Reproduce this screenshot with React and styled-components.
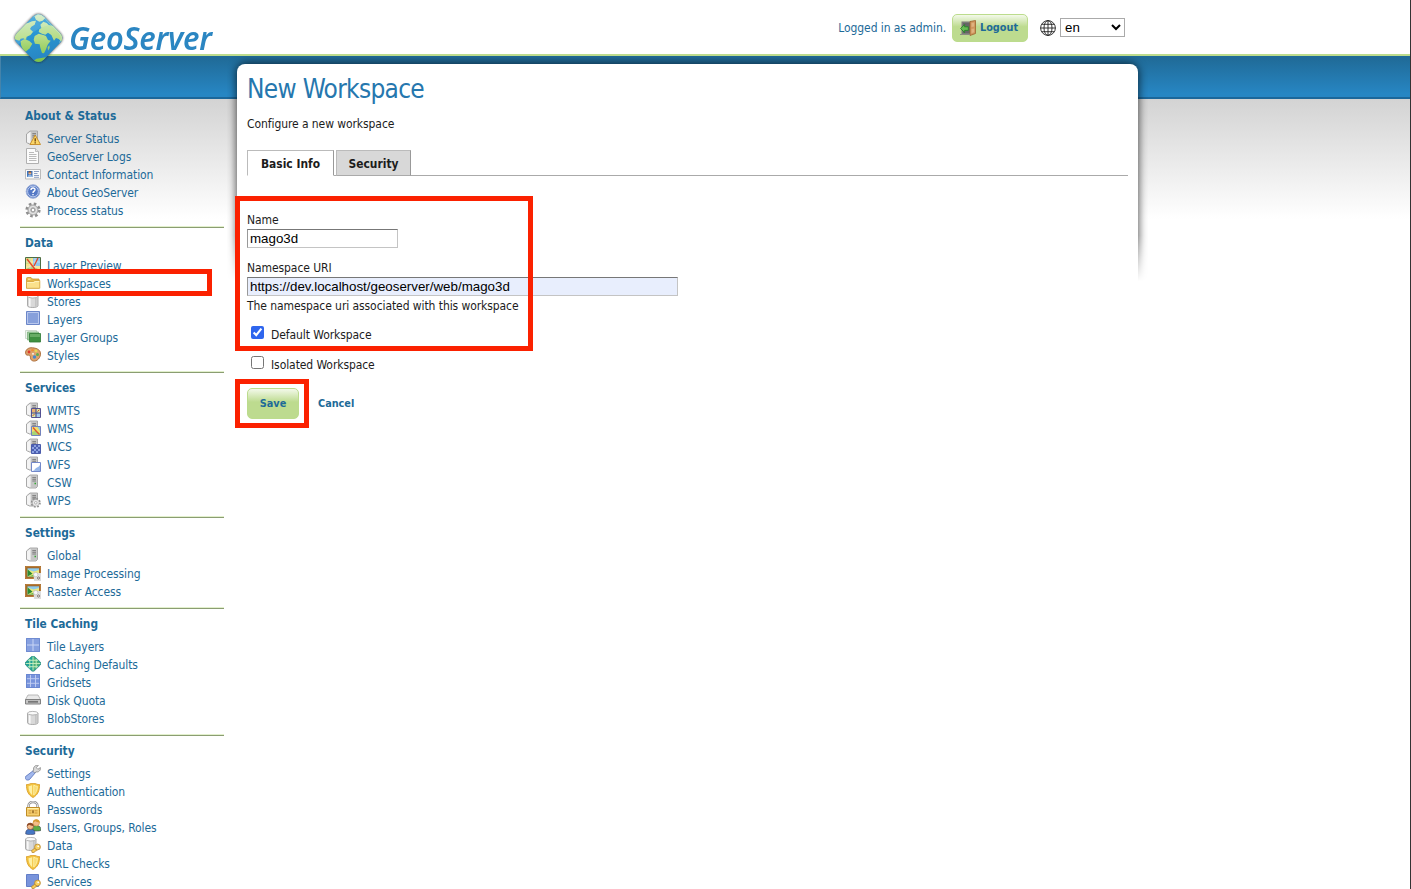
import React from "react";
import styled, { createGlobalStyle, css } from "styled-components";

const GlobalStyle = createGlobalStyle`
  *, *::before, *::after { box-sizing: border-box; }
  html, body { margin: 0; height: 889px; overflow: hidden; background: #fff; }
  body {
    font-family: "DejaVu Sans Condensed", "DejaVu Sans", Tahoma, sans-serif;
    font-stretch: condensed;
    font-size: 12px;
    line-height: 18px;
    letter-spacing: -0.08px;
    color: #1c1c1c;
  }
`;

const Page = styled.div`
  position: relative;
  width: 1411px;
  height: 889px;
  overflow: hidden;
  border-right: 1px solid #333;
  background: linear-gradient(#d3d3d3, #fff) 0 99px / 100% 120px no-repeat #fff;
`;

const Header = styled.header`
  display: flex;
  justify-content: space-between;
  height: 56px;
  padding-left: 10px;
  padding-right: 285px;
  background: #fff;
  border-bottom: 2px solid #bcdc8d;
`;

const Band = styled.div`
  height: 43px;
  background: linear-gradient(#206b98 5%, #2786c3 92%);
  border-bottom: 2px solid #1c679a;
  border-left: 1px solid #4583aa;
`;

const Brand = styled.a`
  position: relative;
  z-index: 3;
  display: flex;
  height: 66px;
  color: #2b86c2;
`;

const BrandName = styled.span`
  padding: 16px 0 0 3px;
  font: italic 600 32px/43px "Noto Sans", sans-serif;
  letter-spacing: -0.2px;
  transform: scaleX(0.96);
  transform-origin: left;
`;

const Session = styled.div`
  display: flex;
  align-items: center;
  height: 28px;
  margin-top: 14px;
  color: #1d6a98;
`;

const buttonStyle = css`
  display: flex;
  align-items: center;
  justify-content: center;
  padding: 0;
  border: 1px solid #bcdc8d;
  border-radius: 5px;
  background: linear-gradient(#f3f9ea, #bddb8f 45%);
  color: #1d6a98;
  font: bold 10.8px/16px "DejaVu Sans Condensed", "DejaVu Sans", sans-serif;
  font-stretch: condensed;
`;

const LogoutButton = styled.button`
  ${buttonStyle}
  gap: 4px;
  width: 76px;
  height: 28px;
  margin: 0 12px 0 6px;
  padding-right: 2px;
`;

const SaveButton = styled.button`
  ${buttonStyle}
  width: 52px;
  height: 31px;
`;

const LanguageSelect = styled.select`
  width: 65px;
  height: 19px;
  margin: 0 0 1px 4px;
  padding: 0;
  border: 1px solid #aaa;
  border-radius: 0;
  background: #fff;
  color: #000;
  font: 13.3px "Liberation Sans", Arial, sans-serif;
`;

const Columns = styled.div`
  position: relative;
  display: flex;
  align-items: flex-start;
  margin-top: -35px;
`;

const Sidebar = styled.nav`
  width: 204px;
  margin: 35px 13px 0 20px;
`;

const Section = styled.section`
  padding: 7px 0 6px 5px;
  border-top: 1px solid #e2f0cc;
  box-shadow: inset 0 1px #8b9d72;
  &:first-child {
    border-top-color: transparent;
    box-shadow: none;
  }
`;

const SectionTitle = styled.h3`
  margin: 0 0 5px;
  font-size: 11.8px;
  line-height: 18px;
  letter-spacing: 0;
  color: #1d6a98;
`;

const Menu = styled.ul`
  margin: 0;
  padding: 0;
  list-style: none;
`;

const MenuItem = styled.li`
  display: flex;
  gap: 6px;
  height: 18px;
  color: #1d6a98;
  white-space: nowrap;
  svg { flex: none; }
`;

const Panel = styled.main`
  position: relative;
  width: 901px;
  height: 825px;
`;

const ShadowFade = styled.div`
  position: absolute;
  z-index: 0;
  top: -8px;
  left: -10px;
  right: -10px;
  height: 230px;
  padding: 8px 10px 0;
  overflow: hidden;
  mask-image: linear-gradient(#000 78%, transparent 98%);
  &::before {
    content: "";
    display: block;
    height: 400px;
    border-radius: 10px;
    box-shadow: 0 0 9px 1px rgba(0, 0, 0, 0.65);
  }
`;

const Content = styled.div`
  position: relative;
  z-index: 1;
  height: 100%;
  padding: 9px 10px 0;
  border-radius: 8px 8px 0 0;
  background: #fff;
`;

const Title = styled.h1`
  margin: 0;
  color: #2677ae;
  font-size: 26px;
  font-weight: 400;
  line-height: 32px;
  letter-spacing: -0.7px;
`;

const Description = styled.p`
  margin: 10px 0 0;
`;

const Tabs = styled.div`
  display: flex;
  align-items: flex-end;
  gap: 2px;
  height: 26px;
  margin-top: 17px;
  width: 881px;
  box-shadow: inset 0 -1px #aaa;
`;

const Tab = styled.button`
  width: ${(p) => p.$width}px;
  height: 26px;
  padding: 1px 0 0;
  border: 1px solid #bbb;
  border-right-color: #999;
  border-bottom-color: ${(p) => (p.$active ? "#fff" : "#aaa")};
  background: ${(p) => (p.$active ? "#fff" : "#d8d8d8")};
  color: #1c1c1c;
  font: bold 11.9px/20px "DejaVu Sans Condensed", "DejaVu Sans", sans-serif;
  font-stretch: condensed;
`;

const Form = styled.form`
  padding-top: 35px;
`;

const Field = styled.div`
  display: flex;
  flex-direction: column;
  margin-bottom: 11px;
`;

const Hint = styled.span`
  padding-top: 1px;
`;

const TextInput = styled.input`
  width: ${(p) => p.$width}px;
  height: 19px;
  padding: 0 2px;
  border: 1px solid #c4c4c4;
  border-top-color: #777;
  border-left-color: #999;
  border-radius: 0;
  background: ${(p) => (p.$filled ? "#e8eefd" : "#fff")};
  color: #000;
  font: 13.33px "Liberation Sans", Arial, sans-serif;
`;

const CheckRow = styled.label`
  display: flex;
  align-items: flex-start;
  gap: 7px;
  height: 30px;
  padding-left: 4px;
  input { width: 13px; height: 13px; margin: 0; accent-color: #2f66ee; }
`;

const Actions = styled.div`
  display: flex;
  align-items: center;
  gap: 19px;
  margin-top: 2px;
`;

const CancelLink = styled.a`
  color: #1d6a98;
  font-size: 10.8px;
  font-weight: bold;
  letter-spacing: 0;
`;

const Highlight = styled.div`
  position: absolute;
  z-index: 5;
  left: ${(p) => p.$x}px;
  top: ${(p) => p.$y}px;
  width: ${(p) => p.$w}px;
  height: ${(p) => p.$h}px;
  border: 5px solid #fb2100;
  pointer-events: none;
`;

const Server = () => (
  <>
    <path d="M1.500 4 5 1h7.500v11.500L11 14H4.500l-3-1.500z" fill="#d0d0d0" stroke="#a0a0a0" strokeWidth=".9" strokeLinejoin="round" />
    <path d="M2 4.300 5.500 1.800v11.600L2 12.200z" fill="#f4f4f4" />
    <path d="M6 2h5.800v10.300l-1 1.200H6z" fill="#c6c6c6" />
    <path d="M7.300 3.600h3.700M7.300 5.300h3.700M7.300 7h3.700" stroke="#777" strokeWidth=".9" />
  </>
);

const Cylinder = () => (
  <>
    <path d="M2.500 3.200v9.600c0 1 2.200 1.700 5.200 1.700s5.300-.7 5.300-1.700V3.200z" fill="#d9d9d9" stroke="#999" strokeWidth=".8" />
    <path d="M4 4.500v8.800l1.600.4V5z" fill="#f8f8f8" />
    <path d="M10 5v8.800l1.700-.4V4.500z" fill="#c4c4c4" />
    <ellipse cx="7.75" cy="3.2" rx="5.2" ry="1.8" fill="#fafafa" stroke="#a5a5a5" strokeWidth=".8" />
  </>
);

const Key = () => (
  <>
    <path d="m12.2 9.500-5.600 4 .4 2h2.200l.7-1.300 1.300-.3 2.600-2.400z" fill="#f8cd54" stroke="#b5812b" strokeWidth=".7" />
    <circle cx="12.500" cy="10" r="2.900" fill="#f9d260" stroke="#b8852f" strokeWidth=".8" />
    <circle cx="13.200" cy="9.300" r=".9" fill="#fff" />
  </>
);

const GearShape = ({ fill = "#c8c8c8" }) => (
  <>
    <circle cx="8" cy="8" r="6.200" fill="none" stroke="#8f8f8f" strokeWidth="2.800" strokeDasharray="2.500 2.370" />
    <circle cx="8" cy="8" r="5.100" fill={fill} stroke="#999" strokeWidth=".7" />
    <circle cx="8" cy="8" r="3.600" fill="none" stroke="#ededed" strokeWidth=".8" />
    <circle cx="8" cy="8" r="1.900" fill="#fff" stroke="#888" strokeWidth=".9" />
  </>
);

const Picture = () => (
  <>
    <path d="M0 1h16v13H0z" fill="#9d6428" />
    <path d="M.7 1.700h14.600v11.600H.7z" fill="none" stroke="#c68b46" strokeWidth=".8" />
    <path d="M2.500 3.300h11.500V11.500H2.500z" fill="#8dcbec" />
    <path d="m2.500 4.500 6 2L14 5v6.500H2.500z" fill="#ebe983" />
    <path d="m2.500 4.200 5 4.600-5 2.700z" fill="#2c8a34" />
    <path d="M3 11.500h8V9z" fill="#6abb48" />
    <path d="M8.500 8H16v8H9z" fill="#ddd" />
    <circle cx="10.700" cy="9.600" r="2.200" fill="#f6f6f6" stroke="#bbb" strokeWidth=".7" />
    <circle cx="13.500" cy="13" r="2" fill="#857b74" stroke="#eee" strokeWidth=".8" />
    <circle cx="13.500" cy="13" r=".7" fill="#ddd" />
  </>
);

const Person = ({ shirt, hair }) => (
  <>
    <path d="M.7 15c-.3-3.500 1.300-5 4.600-5s4.900 1.500 4.600 5c-2 .8-7.200.8-9.200 0z" fill={shirt} stroke="#335" strokeWidth=".5" />
    <circle cx="5.300" cy="7.300" r="3.200" fill="#f2bd8b" stroke={hair} strokeWidth=".6" />
    <path d="M1.900 7.300C1.700 3 8.900 3 8.700 7.300 6.500 6.800 5 6 4.300 5.800z" fill={hair} />
  </>
);

const glyphs = {
  status: (
    <>
      <Server />
      <path d="m10.200 5 5.300 9.500H5z" fill="#fcd667" stroke="#c58a25" strokeWidth=".9" strokeLinejoin="round" />
      <path d="M10.200 8.200v3.200M10.200 12.300v1.200" stroke="#6b3e0c" strokeWidth="1.300" />
    </>
  ),
  page: (
    <>
      <path d="M1.500.5h9l3 3v12h-12z" fill="#fbfbfb" stroke="#b0b0b0" />
      <path d="M10.500.5v3h3" fill="#e6e6e6" stroke="#b0b0b0" strokeWidth=".8" />
      <path d="M4 4.500h5M4 6.500h7.500M4 8.500h7.500M4 10.500h7.500M4 12.500h7.500" stroke="#aaa" strokeWidth=".8" />
    </>
  ),
  card: (
    <>
      <path d="M.5 3.500h15v9.500H.5z" fill="#fafafa" stroke="#bbb" />
      <path d="M2 5h5.500v6H2z" fill="#3e75bd" />
      <circle cx="4.900" cy="7" r="1.500" fill="#eeb183" />
      <path d="M3.400 6.500c.3-1.800 2.800-1.800 3 0z" fill="#774323" />
      <path d="M2.500 11c.5-3 4.300-3 4.800 0z" fill="#92b9e6" />
      <path d="M9 5.500h5M9 7.500h3.500M9 9.500h5M9 11.300h5" stroke="#7289b5" strokeWidth=".8" />
    </>
  ),
  help: (
    <>
      <circle cx="8" cy="7.500" r="6.800" fill="#587cc5" stroke="#9dafd8" />
      <circle cx="8" cy="7.500" r="5.400" fill="#5579c6" stroke="#c8d6f4" strokeWidth=".9" />
      <path d="M6 6c0-2.700 4.200-2.500 4-.2C9.900 7.200 8 7.200 8 8.900M8 9.900v1.400" fill="none" stroke="#fff" strokeWidth="1.400" />
    </>
  ),
  gear: <GearShape />,
  preview: (
    <>
      <path d="M.5.5h15v15H.5z" fill="#f5e28a" stroke="#4e6e44" />
      <path d="M8 1h7v8H8z" fill="#8fc6ed" />
      <path d="M1 1h5v6H1z" fill="#d5dc83" />
      <path d="m1 12 6-3 8 4v2H1z" fill="#a2cc7b" />
      <path d="M5 1v14M10 1v14M1 5h14M1 10h14" stroke="#eee" strokeWidth=".5" />
      <path d="m2 2 7 9 3 4M9 9l4-8" fill="none" stroke="#e54726" strokeWidth="1.300" />
    </>
  ),
  folder: (
    <>
      <path d="M1.500 3.500q0-1 1-1h3.500l1.500 1.500h6.500v9h-12.500z" fill="#e5b848" stroke="#c69734" strokeWidth=".8" />
      <path d="M3 4.200h2.500" stroke="#fff0b7" />
      <path d="M1.500 13.300V6.500h7l1-1h5.300v7.800z" fill="#fae18c" stroke="#d3a33c" strokeWidth=".8" />
      <path d="M2.300 7.500h7l1-1h4" fill="none" stroke="#fff5c7" strokeWidth=".8" />
    </>
  ),
  store: <Cylinder />,
  layer: (
    <>
      <path d="M1.500.5h13v13h-13z" fill="#87a0db" stroke="#6b86c8" />
      <path d="M2.500 1.500h11v11h-11z" fill="none" stroke="#c6d2f1" strokeWidth=".8" />
    </>
  ),
  group: (
    <>
      <path d="M.5 1.500h11v8H.5z" fill="#edf4ed" stroke="#c1d1c1" strokeWidth=".8" />
      <path d="M2.500 3h11v8h-11z" fill="#a1cba0" stroke="#7eb27e" strokeWidth=".8" />
      <path d="M4.500 4.500h11v8.500h-11z" fill="#3f9141" stroke="#317b35" strokeWidth=".8" />
      <path d="M5 5h10v3H5z" fill="#68ad65" />
    </>
  ),
  palette: (
    <>
      <path d="M7.500.8C3 .2.200 3.200.6 6.200c.2 2.600 2.200 1.800 3.500 1.900 2.300.200.300 3.600 2.500 5.200 3.300 2.400 8.500-.8 8.900-6.100.3-3.900-3-6-8-6.400z" fill="#dca36d" stroke="#a86833" strokeWidth=".9" />
      <circle cx="4" cy="5" r="1.400" fill="#de392a" />
      <circle cx="7.500" cy="3.200" r="1.300" fill="#ee8b36" />
      <circle cx="11" cy="3.900" r="1.400" fill="#ead94d" />
      <circle cx="12.500" cy="7.500" r="1.500" fill="#5cae4f" />
      <circle cx="9.500" cy="10" r="1.700" fill="#4787ce" />
      <circle cx="8" cy="6.800" r=".9" fill="#fff" />
    </>
  ),
  wmts: (
    <>
      <Server />
      <path d="M6.500 6.500h9v9h-9z" fill="#d9e9a8" stroke="#555293" />
      <path d="M7 7h4v3.500H7z" fill="#e8b070" />
      <path d="M11 10.800h4v4h-4z" fill="#a2c6ec" />
      <path d="M11 6.500v9M6.500 11h9" stroke="#474588" strokeWidth="1.100" />
      <path d="m7.500 14 2-2M12.500 9.600l2-2" stroke="#ce4530" />
    </>
  ),
  wms: (
    <>
      <Server />
      <path d="M6.500 6.500h9v9h-9z" fill="#f2df6c" stroke="#7382bd" />
      <path d="m7 12 4-1.500 4 3V15H7z" fill="#a9d574" />
      <path d="M12.500 7H15v4z" fill="#8ac6e6" />
      <path d="m8 7.500 3.500 4 3 3" fill="none" stroke="#df5530" strokeWidth="1.300" />
    </>
  ),
  wcs: (
    <>
      <Server />
      <path d="M6.500 6.500h9v9h-9z" fill="#8ba2e1" stroke="#4b5cab" />
      <path d="M7 7h2v2H7zm4 0h2v2h-2zM9 9h2v2H9zm4 0h2v2h-2zm-6 2h2v2H7zm4 0h2v2h-2zm-2 2h2v2H9zm4 0h2v2h-2z" fill="#4c60b3" />
    </>
  ),
  wfs: (
    <>
      <Server />
      <path d="M6.500 6.500h9v9h-9z" fill="#fff" stroke="#7388c9" />
      <path d="M7.500 14.800c2.500-.5 2.500-2.800 4.500-3.300 1.800-.4 2-1.500 3-2.500v6z" fill="#94b5e8" />
    </>
  ),
  server: (
    <>
      <Server />
      <path d="M9.500 8.700H11v1.600H9.500z" fill="#33a832" />
    </>
  ),
  wps: (
    <>
      <Server />
      <g transform="translate(5.500 5.500) scale(.66)"><GearShape fill="#e6e6e6" /></g>
    </>
  ),
  picture: <Picture />,
  tiles: (
    <>
      <path d="M1 0h14v14H1z" fill="#86a0e0" />
      <path d="M8 0v14M1 7h14" stroke="#c8d5f5" />
      <path d="M1.500.5h13v13h-13z" fill="none" stroke="#6f8bd1" />
    </>
  ),
  cache: (
    <>
      <path d="M6.500.5q1.500-1 3 0L15.300 6q1 1.500 0 3L9.500 14.700q-1.500 1-3 0L.7 9q-1-1.500 0-3z" fill="#22a394" stroke="#25857d" strokeWidth=".7" />
      <path d="M8 0 15.500 7.500 8 15z" fill="#65b569" opacity=".65" />
      <path d="M4.800 3v9.300M8 .7v13.800M11.200 3v9.300M3 4.300h10M.8 7.500h14.400M3 10.700h10" stroke="#c9f0c0" strokeWidth=".9" />
    </>
  ),
  grid: (
    <>
      <path d="M1 0h14v14H1z" fill="#7894dc" />
      <path d="M5.500 0v14M10.500 0v14M1 4.700h14M1 9.300h14" stroke="#c3d0f3" strokeWidth=".9" />
      <path d="M1.500.5h13v13h-13z" fill="none" stroke="#6886cf" strokeWidth=".9" />
    </>
  ),
  disk: (
    <>
      <path d="M3 3h10l2.500 4.500H.5z" fill="#e9e9e9" stroke="#aaa" strokeWidth=".8" />
      <path d="M.5 7.500h15V12H.5z" fill="#c5c5c5" stroke="#777" strokeWidth=".9" />
      <path d="M3 8.900h10v1.800H3z" fill="#777" />
    </>
  ),
  wrench: (
    <>
      <path d="m8.500 5.500 2 2-6.200 7.200c-2.800 1.200-5-1-3.700-3.200z" fill="#a1b7ec" stroke="#6079c0" strokeWidth=".9" />
      <path d="M13.300.3c-3-.6-5.500 2-4.600 4.700l-1 1 2 2 1.200-1.200c2.700.8 5-1.500 4.500-4.200l-2.500 1.700-1.600-1.600z" fill="#dadada" stroke="#858585" strokeWidth=".8" />
    </>
  ),
  shield: (
    <>
      <path d="M1.500 1.500c2 .4 3.500-.8 4.500-1.100h4c1 .3 2.500 1.500 4.500 1.100.2 6-1.800 10.700-6.500 13C3.300 12.200 1.300 7.500 1.500 1.500z" fill="#f3c33f" stroke="#dba12d" strokeWidth=".9" />
      <path d="M3.500 3.300c1.600-.1 2.600-.8 3.700-1.300v10.300C4.800 10.400 3.500 7 3.500 3.300z" fill="#fff0a3" />
      <path d="M8.700 2.200c1.300.5 2.300 1 3.700 1.100 0 3.800-1.300 6.900-3.700 8.800z" fill="#f8dc73" stroke="#fff2b0" strokeWidth=".8" />
    </>
  ),
  lock: (
    <>
      <path d="M3.500 7V5c0-5.500 9-5.500 9 0v2" fill="none" stroke="#929292" strokeWidth="2.500" />
      <path d="M3.500 7V5c0-5.500 9-5.500 9 0v2" fill="none" stroke="#e8e8e8" />
      <path d="M1.500 6.500h13v8.500h-13z" fill="#f7d070" stroke="#bf8c26" />
      <path d="M2.500 7.500h11" stroke="#fff0a4" />
      <path d="M3.500 9.800h3M3.500 12h3M9.500 9.800h3M9.500 12h3" stroke="#cd973b" />
      <path d="M7.300 9.300h1.400v3H7.300z" fill="#8b5c19" />
    </>
  ),
  users: (
    <>
      <g transform="translate(6 -3.500)"><Person shirt="#5cab46" hair="#d59b32" /></g>
      <Person shirt="#4677c4" hair="#8c4a28" />
    </>
  ),
  dataKey: (
    <>
      <g transform="translate(-2 -1)"><Cylinder /></g>
      <Key />
    </>
  ),
  serviceKey: (
    <>
      <path d="M1.500 1.500h12v12h-12z" fill="#7994dc" stroke="#627ec7" />
      <Key />
    </>
  ),
};

const Icon = ({ name }) => (
  <svg width="16" height="16" viewBox="0 0 16 16" aria-hidden="true">
    {glyphs[name]}
  </svg>
);

const diamond = "M33 16.500Q38.500 11.500 44 16.500L60 33Q64.500 38 60 43L44 59.500Q38.500 64.500 33 59.500L17 43Q12.500 38 17 33z";

const GlobeLogo = () => (
  <svg width="56" height="66" viewBox="10 0 56 66" aria-hidden="true">
    <defs>
      <linearGradient id="ocean" x1="0" y1="0" x2="0.300" y2="1">
        <stop offset="0" stopColor="#3fa9de" />
        <stop offset=".5" stopColor="#2a97d3" />
        <stop offset="1" stopColor="#2784c2" />
      </linearGradient>
      <linearGradient id="land" gradientUnits="userSpaceOnUse" x1="0" y1="45" x2="0" y2="185">
        <stop offset="0" stopColor="#cfebc4" />
        <stop offset=".5" stopColor="#b5dc84" />
        <stop offset="1" stopColor="#7cc243" />
      </linearGradient>
      <clipPath id="diamond">
        <path d={diamond} />
      </clipPath>
      <filter id="soft" x="-20%" y="-20%" width="140%" height="140%">
        <feGaussianBlur stdDeviation="1.300" />
      </filter>
    </defs>
    <path d={diamond} fill="#222" stroke="#222" opacity=".7" filter="url(#soft)" />
    <g clipPath="url(#diamond)">
      <path d="M10 10h56v56H10z" fill="url(#ocean)" />
      <g fill="url(#land)" transform="scale(.3333)">
        <path d="M40 110 72 72l14-4 10-4 12-2-4 12-10 6-4 7 9 8-7 10-12 5-2 9-8-4-8 1-4 6-14-4z" />
        <path d="m62 124 12-7 14 6 9 8-8 14-12 10-8-6-6-14z" />
        <path d="m104 50 8-7 12 1 12 10-8 8-10 3-10-6z" />
        <path d="m116 96 2-8 6-4-3-10 9-9 10 4 6 6 14 2 26 26v24l-10-10-8-3-6 8-8-17-10-7-8 6-10-3z" />
        <path d="m104 108 12-7 14 4 8 3 6 12 8 2-9 12-5 14-6 12-6-1-5-16-2-10-14-2-4-12z" />
        <path d="m143 142 5-6 1 8-5 8zM98 184l12-8 28-4-14 16z" />
      </g>
      <path d="M15 34 34 15q5-3 10 1l8 9q-14 0-36 22z" fill="#fff" opacity=".12" />
    </g>
    <path d="M33.500 17Q38.500 12.500 43.500 17L59.500 33.500Q63 38 59.500 42.500" fill="none" stroke="#c4e6d5" strokeWidth=".8" opacity=".7" />
  </svg>
);

const DoorIcon = () => (
  <svg width="16" height="16" viewBox="0 0 16 16" aria-hidden="true">
    <path d="M1.500 1.500H11V14H1.500z" fill="#7b7b78" />
    <path d="M3 3h7v10H3z" fill="#666" />
    <path d="m10 1.500 5.500-1v13L10 15.500z" fill="#cf965d" stroke="#9d652e" strokeWidth=".8" />
    <path d="m11.500 3 2.700-.5v4l-2.700.5zm0 6 2.700-.5v3.700l-2.700 1z" fill="#dfb27e" />
    <path d="m.6 8.500 4-4v2.300h3.700v3.600H4.600v2.300z" fill="#68bd55" stroke="#28822a" strokeWidth=".9" />
    <path d="M0 14.500h10" stroke="#8b8b80" />
  </svg>
);

const LanguageIcon = () => (
  <svg width="16" height="16" viewBox="0 0 16 16" fill="none" stroke="#222" strokeWidth=".9" aria-hidden="true">
    <circle cx="8" cy="8" r="7.400" />
    <ellipse cx="8" cy="8" rx="4" ry="7.400" />
    <path d="M8 .6v14.800M.6 8h14.800M1.800 4.300h12.400M1.800 11.700h12.400" />
  </svg>
);

const sections = [
  { title: "About & Status", items: [["status", "Server Status"], ["page", "GeoServer Logs"], ["card", "Contact Information"], ["help", "About GeoServer"], ["gear", "Process status"]] },
  { title: "Data", items: [["preview", "Layer Preview"], ["folder", "Workspaces"], ["store", "Stores"], ["layer", "Layers"], ["group", "Layer Groups"], ["palette", "Styles"]] },
  { title: "Services", items: [["wmts", "WMTS"], ["wms", "WMS"], ["wcs", "WCS"], ["wfs", "WFS"], ["server", "CSW"], ["wps", "WPS"]] },
  { title: "Settings", items: [["server", "Global"], ["picture", "Image Processing"], ["picture", "Raster Access"]] },
  { title: "Tile Caching", items: [["tiles", "Tile Layers"], ["cache", "Caching Defaults"], ["grid", "Gridsets"], ["disk", "Disk Quota"], ["store", "BlobStores"]] },
  { title: "Security", items: [["wrench", "Settings"], ["shield", "Authentication"], ["lock", "Passwords"], ["users", "Users, Groups, Roles"], ["dataKey", "Data"], ["shield", "URL Checks"], ["serviceKey", "Services"]] },
];

export default function App() {
  return (
    <Page>
      <GlobalStyle />
      <Header>
        <Brand>
          <GlobeLogo />
          <BrandName>GeoServer</BrandName>
        </Brand>
        <Session>
          <span>Logged in as admin.</span>
          <LogoutButton type="button"><DoorIcon />Logout</LogoutButton>
          <LanguageIcon />
          <LanguageSelect defaultValue="en"><option value="en">en</option></LanguageSelect>
        </Session>
      </Header>
      <Band />
      <Columns>
        <Sidebar>
          {sections.map((s) => (
            <Section key={s.title}>
              <SectionTitle>{s.title}</SectionTitle>
              <Menu>
                {s.items.map(([icon, label]) => (
                  <MenuItem key={label}><Icon name={icon} /><span>{label}</span></MenuItem>
                ))}
              </Menu>
            </Section>
          ))}
        </Sidebar>
        <Panel>
          <ShadowFade />
          <Content>
            <Title>New Workspace</Title>
            <Description>Configure a new workspace</Description>
            <Tabs>
              <Tab type="button" $active $width={87}>Basic Info</Tab>
              <Tab type="button" $width={75}>Security</Tab>
            </Tabs>
            <Form>
              <Field>
                <span>Name</span>
                <TextInput $width={151} defaultValue="mago3d" />
              </Field>
              <Field>
                <span>Namespace URI</span>
                <TextInput $width={431} $filled defaultValue="https://dev.localhost/geoserver/web/mago3d" />
                <Hint>The namespace uri associated with this workspace</Hint>
              </Field>
              <CheckRow><input type="checkbox" defaultChecked /><span>Default Workspace</span></CheckRow>
              <CheckRow><input type="checkbox" /><span>Isolated Workspace</span></CheckRow>
              <Actions>
                <SaveButton type="button">Save</SaveButton>
                <CancelLink>Cancel</CancelLink>
              </Actions>
            </Form>
          </Content>
        </Panel>
      </Columns>
      <Highlight $x={17} $y={269} $w={195} $h={27} />
      <Highlight $x={235} $y={196} $w={298} $h={155} />
      <Highlight $x={235} $y={379} $w={74} $h={49} />
    </Page>
  );
}
